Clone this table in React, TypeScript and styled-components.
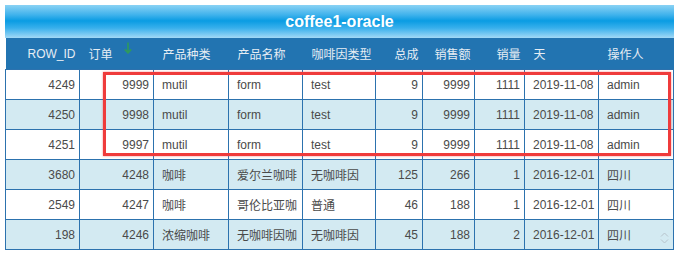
import React, { FC } from "react";
import styled, { createGlobalStyle } from "styled-components";

type Align = "left" | "right";

interface IColumn {
  key: string;
  title: string;
  width: number;
  align: Align;
  headAlign: Align;
}

const columns: IColumn[] = [
  { key: "rowId", title: "ROW_ID", width: 74, align: "right", headAlign: "right" },
  { key: "order", title: "订单", width: 74, align: "right", headAlign: "left" },
  { key: "kind", title: "产品种类", width: 75, align: "left", headAlign: "left" },
  { key: "name", title: "产品名称", width: 74, align: "left", headAlign: "left" },
  { key: "caffeine", title: "咖啡因类型", width: 73, align: "left", headAlign: "left" },
  { key: "total", title: "总成", width: 47, align: "right", headAlign: "right" },
  { key: "sales", title: "销售额", width: 52, align: "right", headAlign: "right" },
  { key: "qty", title: "销量", width: 50, align: "right", headAlign: "right" },
  { key: "day", title: "天", width: 74, align: "left", headAlign: "left" },
  { key: "user", title: "操作人", width: 75, align: "left", headAlign: "left" },
];

const rows: string[][] = [
  ["4249", "9999", "mutil", "form", "test", "9", "9999", "1111", "2019-11-08", "admin"],
  ["4250", "9998", "mutil", "form", "test", "9", "9999", "1111", "2019-11-08", "admin"],
  ["4251", "9997", "mutil", "form", "test", "9", "9999", "1111", "2019-11-08", "admin"],
  ["3680", "4248", "咖啡", "爱尔兰咖啡", "无咖啡因", "125", "266", "1", "2016-12-01", "四川"],
  ["2549", "4247", "咖啡", "哥伦比亚咖", "普通", "46", "188", "1", "2016-12-01", "四川"],
  ["198", "4246", "浓缩咖啡", "无咖啡因咖", "无咖啡因", "45", "188", "2", "2016-12-01", "四川"],
];

const App: FC = () => {
  return (
    <>
      <GlobalStyle />
      <Page>
        <Grid>
          <Title>coffee1-oracle</Title>
          <Table>
            <colgroup>
              {columns.map((c) => (
                <col key={c.key} style={{ width: c.width }} />
              ))}
            </colgroup>
            <thead>
              <tr>
                {columns.map((c) => (
                  <HeadCell key={c.key} $align={c.headAlign}>
                    {c.title}
                    {c.key === "order" && (
                      <SortArrow width="8" height="12" viewBox="0 0 8 12">
                        <path d="M4 0.5V10.8M0.8 7.4L4 10.9L7.2 7.4" fill="none" stroke="#2f9a5c" strokeWidth="1.6" />
                      </SortArrow>
                    )}
                  </HeadCell>
                ))}
              </tr>
            </thead>
            <tbody>
              {rows.map((r, i) => (
                <Row key={i} $striped={i % 2 === 1}>
                  {r.map((v, j) => (
                    <Cell key={j} $align={columns[j].align}>
                      {v}
                    </Cell>
                  ))}
                </Row>
              ))}
            </tbody>
          </Table>
          <Highlight />
          <Spinner width="9" height="12" viewBox="0 0 9 12">
            <path d="M1 4.5L4.5 1L8 4.5M1 7.5L4.5 11L8 7.5" fill="none" stroke="#b8c4cc" strokeWidth="1" />
          </Spinner>
        </Grid>
      </Page>
    </>
  );
};

export default App;

const GlobalStyle = createGlobalStyle`
  body {
    margin: 0;
    background: #ffffff;
    font-family: "Liberation Sans", Arial, "Noto Sans CJK SC", sans-serif;
  }
`;

const Page = styled.div`
  padding: 5px 0 0 5px;
`;

const Grid = styled.div`
  position: relative;
  width: 669px;
`;

const Title = styled.div`
  height: 33px;
  line-height: 33px;
  text-align: center;
  color: #ffffff;
  font-size: 16px;
  font-weight: bold;
  background: linear-gradient(
    to bottom,
    #8ad2f4 0%,
    #3fb2ec 30%,
    #0a9ce3 48%,
    #39b0ec 70%,
    #a2d9f6 100%
  );
`;

const Table = styled.table`
  width: 669px;
  table-layout: fixed;
  border-collapse: collapse;
  font-size: 12px;
`;

const HeadCell = styled.th<{ $align: Align }>`
  position: relative;
  height: 31px;
  padding: 0 4px 0 9px;
  background: #2274b1;
  color: #e6edf4;
  font-weight: normal;
  font-size: 12px;
  text-align: ${(p) => p.$align};
  white-space: nowrap;
`;

const SortArrow = styled.svg`
  position: absolute;
  left: 44px;
  top: 4px;
`;

const Row = styled.tr<{ $striped: boolean }>`
  background: ${(p) => (p.$striped ? "#d3eaf2" : "#ffffff")};
`;

const Cell = styled.td<{ $align: Align }>`
  height: 29px;
  padding: 0 4px 0 8px;
  border: 1px solid #2c72ae;
  color: #4a4a4a;
  text-align: ${(p) => p.$align};
  white-space: nowrap;
  overflow: hidden;
`;

const Highlight = styled.div`
  position: absolute;
  left: 98px;
  top: 67px;
  width: 562px;
  height: 78px;
  border: 3px solid #ef3b3b;
  box-shadow: 0 0 2px rgba(239, 59, 59, 0.6);
  pointer-events: none;
`;

const Spinner = styled.svg`
  position: absolute;
  right: 5px;
  bottom: 6px;
`;
